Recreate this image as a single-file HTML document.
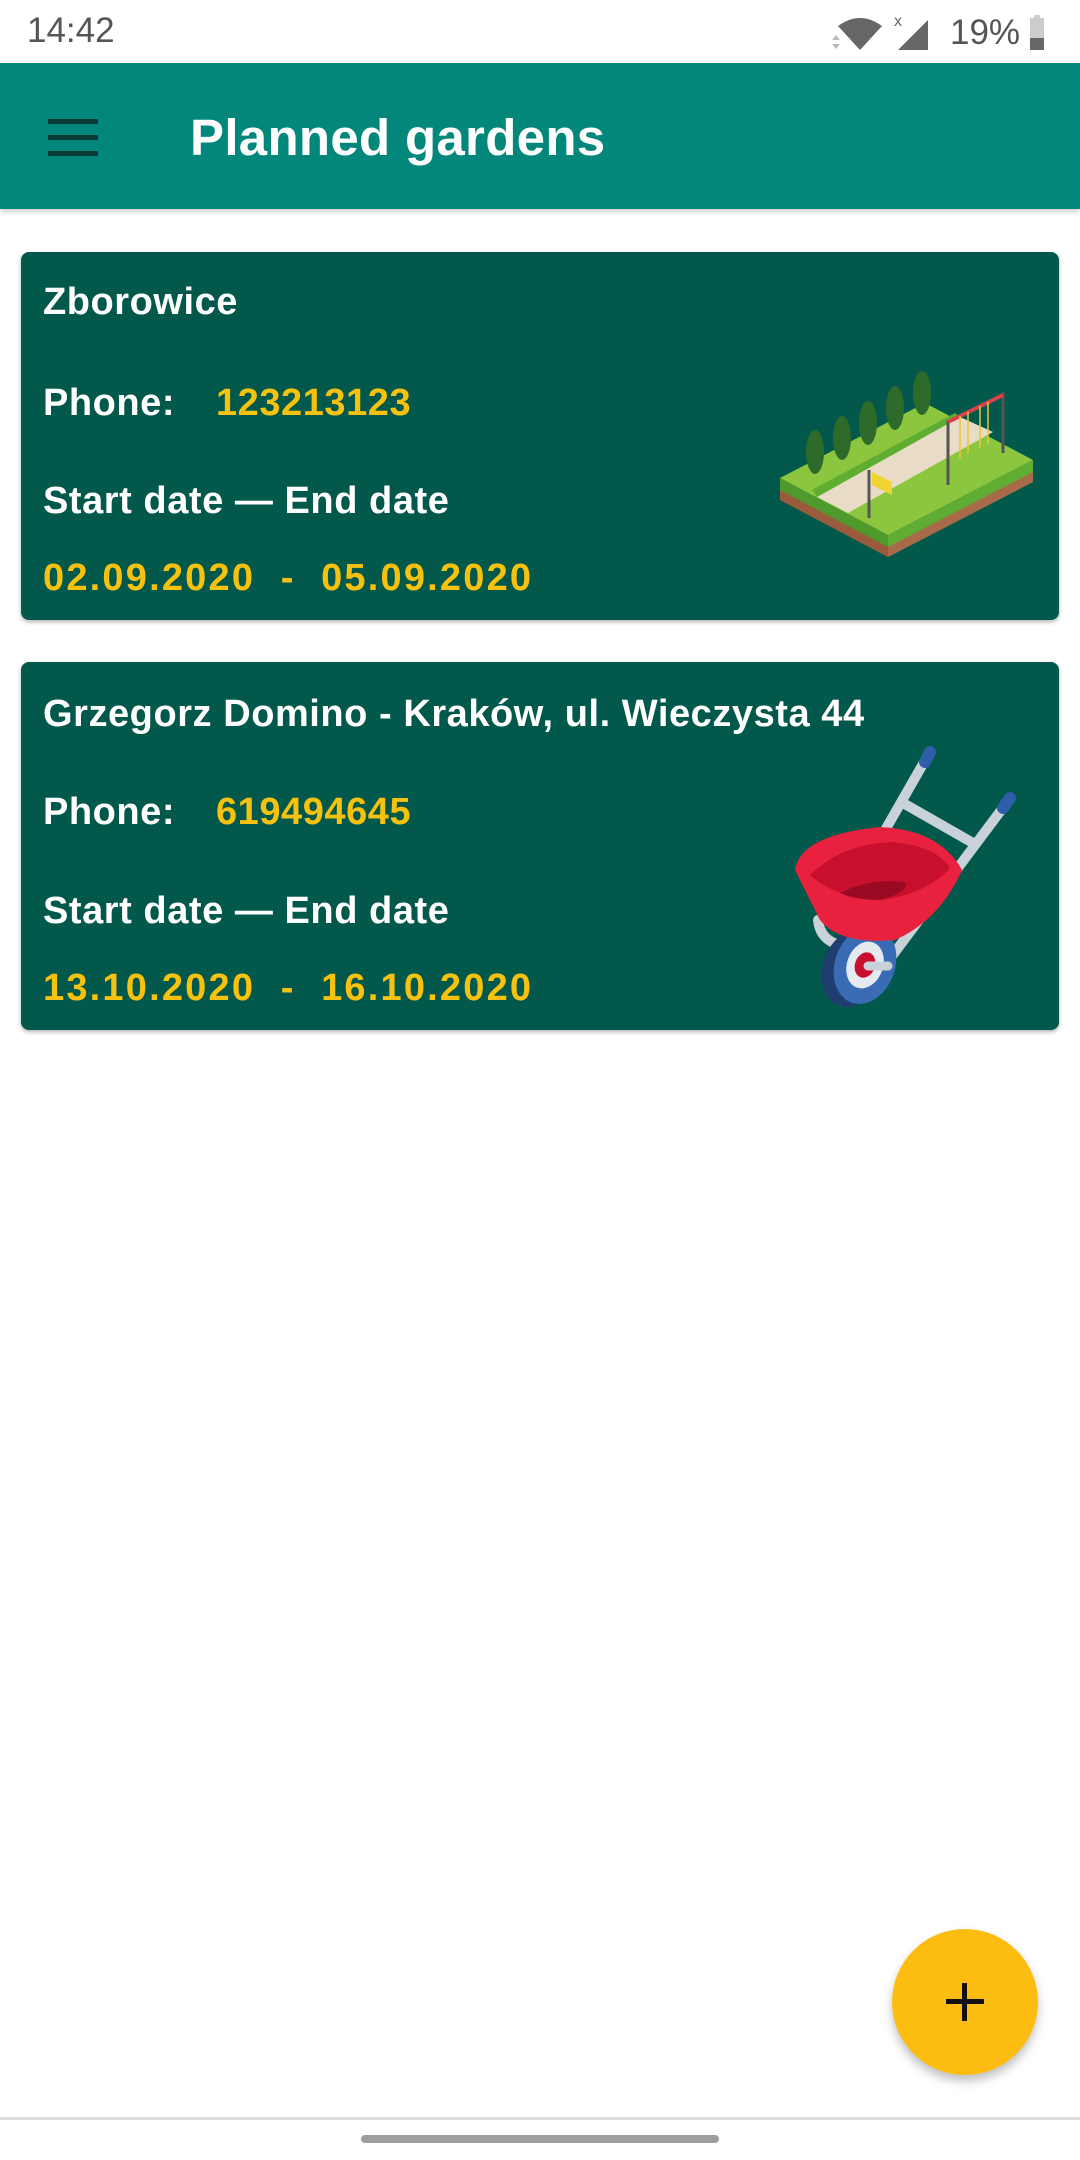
<!DOCTYPE html>
<html><head><meta charset="utf-8"><style>
*{margin:0;padding:0;box-sizing:border-box}
body{width:1080px;height:2160px;background:#fff;position:relative;overflow:hidden;font-family:"Liberation Sans",Roboto,sans-serif}
.abs{position:absolute}
.status{top:0;left:0;width:1080px;height:63px;background:#fff}
.bar{top:63px;left:0;width:1080px;height:146px;background:#02877a;box-shadow:0 3px 5px rgba(0,0,0,.18)}
.title{left:190px;top:108px;font-size:51px;font-weight:bold;color:#fff;line-height:60px;letter-spacing:0.3px}
.card{left:21px;width:1038px;height:368px;background:#02584b;border-radius:8px;box-shadow:0 2px 4px rgba(0,0,0,.3)}
.t{position:absolute;left:22px;font-size:38px;font-weight:bold;color:#fff;line-height:46px;white-space:nowrap;letter-spacing:0.55px}
.y{color:#f6c10f}
.d{letter-spacing:2.2px}
.fab{left:892px;top:1929px;width:146px;height:146px;border-radius:50%;background:#fdbd10;box-shadow:0 6px 10px rgba(0,0,0,.25)}
</style></head><body>
<div class="abs status">
<div class="abs" style="left:27px;top:8px;font-size:35px;color:#555;line-height:46px">14:42</div>
<svg class="abs" style="left:830px;top:10px" width="220" height="44" viewBox="0 0 220 44">
<path d="M8 16 Q30 0 52 16 L30 40 Z" fill="#666"/>
<path d="M2 30 l4-5 4 5z M2 34 l4 5 4-5z" fill="#bbb"/>
<path d="M98 10 L98 40 L68 40 Z" fill="#666"/>
<text x="64" y="16" font-size="16" fill="#666" font-family="Liberation Sans">x</text>
<text x="120" y="34" font-size="35" fill="#555" font-family="Liberation Sans">19%</text>
<rect x="200" y="8" width="14" height="32" fill="#ccc"/><rect x="200" y="28" width="14" height="12" fill="#666"/><rect x="204" y="5" width="6" height="4" fill="#ccc"/>
</svg>
</div>
<div class="abs bar">
<div class="abs" style="left:48px;top:56px;width:50px;height:5px;background:#0c3b35"></div>
<div class="abs" style="left:48px;top:72px;width:50px;height:5px;background:#0c3b35"></div>
<div class="abs" style="left:48px;top:88px;width:50px;height:5px;background:#0c3b35"></div>
</div>
<div class="abs title">Planned gardens</div>

<div class="abs card" style="top:252px">
<div class="t" style="top:27px">Zborowice</div>
<div class="t" style="top:128px">Phone:<span class="y" style="position:absolute;left:173px">123213123</span></div>
<div class="t" style="top:226px">Start date — End date</div>
<div class="t y d" style="top:303px">02.09.2020 &nbsp;- &nbsp;05.09.2020</div>
<svg class="abs" style="left:739px;top:98px" width="290" height="220" viewBox="0 0 290 220">
<polygon points="20,128 128,185 128,207 20,150" fill="#4f9a2c"/>
<polygon points="20,140 128,197 128,207 20,150" fill="#9a5a3c"/>
<polygon points="128,185 273,110 273,132 128,207" fill="#5fae33"/>
<polygon points="128,197 273,122 273,132 128,207" fill="#a86a48"/>
<polygon points="20,128 165,53 273,110 128,185" fill="#8cc63f"/>
<polygon points="57,147 88,163 233,82 200,67" fill="#e8dcc6"/>
<polygon points="52,140 57,147 200,67 195,63" fill="#5fae33"/>
<g fill="#2e6b2a">
<ellipse cx="55" cy="102" rx="9" ry="22"/><ellipse cx="82" cy="88" rx="9" ry="22"/><ellipse cx="108" cy="73" rx="9" ry="22"/><ellipse cx="135" cy="58" rx="9" ry="22"/><ellipse cx="162" cy="43" rx="9" ry="22"/>
</g>
<g stroke="#555" stroke-width="3"><line x1="109" y1="120" x2="109" y2="168"/><line x1="188" y1="70" x2="188" y2="135"/><line x1="243" y1="42" x2="243" y2="103"/></g>
<polygon points="112,122 132,132 132,145 112,135" fill="#f2d431"/>
<line x1="188" y1="72" x2="243" y2="45" stroke="#d9424a" stroke-width="4"/>
<g stroke="#e8c73a" stroke-width="1.5"><line x1="200" y1="66" x2="200" y2="108"/><line x1="208" y1="62" x2="208" y2="104"/><line x1="220" y1="56" x2="220" y2="98"/><line x1="228" y1="52" x2="228" y2="94"/></g>
</svg>
</div>

<div class="abs card" style="top:662px">
<div class="t" style="top:29px">Grzegorz Domino - Kraków, ul. Wieczysta 44</div>
<div class="t" style="top:127px">Phone:<span class="y" style="position:absolute;left:173px">619494645</span></div>
<div class="t" style="top:226px">Start date — End date</div>
<div class="t y d" style="top:303px">13.10.2020 &nbsp;- &nbsp;16.10.2020</div>
<svg class="abs" style="left:719px;top:58px" width="320" height="300" viewBox="0 0 320 300">
<g stroke="#c9d1d9" stroke-width="10" stroke-linecap="round" fill="none">
<line x1="187" y1="37" x2="128" y2="140"/>
<line x1="265" y1="85" x2="143" y2="248"/>
<line x1="163" y1="83" x2="233" y2="123"/>
<path d="M78 200 Q80 220 100 225"/>
</g>
<g stroke="#2f5ea8" stroke-width="12" stroke-linecap="round"><line x1="190" y1="32" x2="185" y2="42"/><line x1="270" y1="78" x2="263" y2="88"/></g>
<ellipse cx="113" cy="248" rx="30" ry="40" fill="#1f3d6e" transform="rotate(20 113 248)"/>
<ellipse cx="125" cy="245" rx="30" ry="40" fill="#3a6bb5" transform="rotate(20 125 245)"/>
<ellipse cx="125" cy="245" rx="18" ry="24" fill="#e4eaf0" transform="rotate(20 125 245)"/>
<ellipse cx="125" cy="245" rx="10" ry="13" fill="#c8102e" transform="rotate(20 125 245)"/>
<line x1="128" y1="246" x2="148" y2="246" stroke="#c9d1d9" stroke-width="9" stroke-linecap="round"/>
<path d="M55 150 Q60 115 140 107 Q200 110 222 150 Q200 200 155 220 Q100 225 80 200 Z" fill="#e8213f"/>
<path d="M70 155 Q100 125 150 122 Q195 125 210 148 Q185 175 140 180 Q95 178 70 155 Z" fill="#c8102e"/>
<path d="M100 173 Q130 158 165 162 Q170 172 140 180 Q115 180 100 173 Z" fill="#9a0a22"/>
</svg>
</div>

<div class="abs fab">
<div class="abs" style="left:54px;top:70px;width:38px;height:5px;background:#111"></div>
<div class="abs" style="left:70px;top:54px;width:5px;height:38px;background:#111"></div>
</div>
<div class="abs" style="left:0;top:2117px;width:1080px;height:3px;background:#dcdcdc"></div>
<div class="abs" style="left:361px;top:2135px;width:358px;height:8px;border-radius:4px;background:#9e9e9e"></div>
</body></html>
